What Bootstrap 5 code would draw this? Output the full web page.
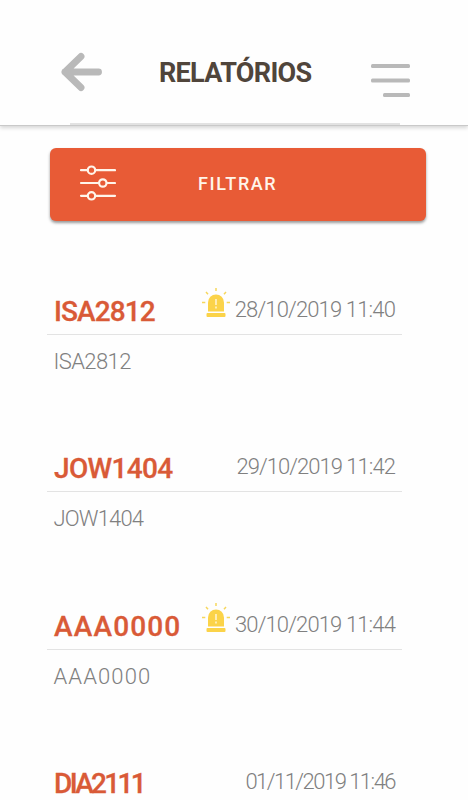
<!DOCTYPE html>
<html lang="pt-BR">
<head>
<meta charset="utf-8">
<meta name="viewport" content="width=device-width, initial-scale=1">
<title>Relatórios</title>
<link href="https://cdn.jsdelivr.net/npm/bootstrap@5.3.0/dist/css/bootstrap.min.css" rel="stylesheet">
<style>
body{background:#fefefe;font-family:Roboto,"Liberation Sans",sans-serif;height:800px}
.topbar{height:126px;padding:0 58px 0 61px;background:#fefefe;border-bottom:1px solid #c9c9c9;box-shadow:0 2px 4px rgba(0,0,0,.16)}
.topbar .tab-edge{height:2px;margin:0 10px 0 9px;background:#e2e2e2}
.page-title{font-size:27px;line-height:32px;font-weight:700;color:#50453b;letter-spacing:-.68px;margin:9px 0 0 57px}
.filter-btn{height:73px;width:376px;margin:22px 0 0 50px;border-radius:6px;background:#e85b36;color:#fff5ea;box-shadow:0 2px 3px rgba(0,0,0,.4);font-size:18px;font-weight:500;letter-spacing:1.6px;padding:0 0 2px 29px;border:0}
.filter-btn:hover{background:#e85b36;color:#fff5ea}
.filter-btn svg{margin-bottom:2px}
.filter-btn span{margin-left:82px}
.reports{height:515px;margin:64px 66px 0 47px}
.report{height:157.4px}
.report:last-child{height:50px}
.report-head{height:50px;border-bottom:1.5px solid #e3e3e3;padding:0 7px 0 7px}
.report:last-child .report-head{border-bottom:0}
.plate{font-size:28px;line-height:32px;font-weight:500;color:#d95a37;-webkit-text-stroke:.3px #d95a37;margin-top:11px;letter-spacing:var(--plate-track)}
.stamp{font-size:22px;line-height:26px;font-weight:300;color:#808080;margin-top:12px;letter-spacing:var(--stamp-track)}
.plate-sub{font-size:22px;line-height:26px;font-weight:300;color:#808080;padding-left:6.500px;margin-top:14px;letter-spacing:var(--sub-track)}
.siren{margin:3px 4px 0 auto}
.track-a{--plate-track:-.9px;--sub-track:-.6px;--stamp-track:-.85px}
.track-b{--plate-track:-.65px;--sub-track:-.85px;--stamp-track:-.96px}
.track-c{--plate-track:1.15px;--sub-track:1.1px;--stamp-track:-.87px}
.track-d{--plate-track:-2.65px;--stamp-track:-1.52px}
</style>
<script src="https://cdn.jsdelivr.net/npm/bootstrap@5.3.0/dist/js/bootstrap.bundle.min.js"></script>
</head>
<body class="overflow-hidden">
<svg class="d-none" xmlns="http://www.w3.org/2000/svg">
<symbol id="siren" viewBox="0 0 30 31">
<path d="M7 23.500V14.500a8 8 0 0 1 16 0v9z" fill="#fbd349"/>
<rect x="5.500" y="25" width="19" height="4" rx="1" fill="#fbd349"/>
<path d="M15 0v3M5 4l2 2.200M25 4l-2 2.200M1 14.500h3.300M25.700 14.500H29" stroke="#f6d75c" stroke-width="1.500"/>
<path d="M15 11v6M15 18.500v2" stroke="#fff3cf" stroke-width="1.600"/>
</symbol>
</svg>
<header class="topbar d-flex flex-column justify-content-between">
<div class="d-flex align-items-start pt-5">
<svg class="mt-1" width="41" height="40" viewBox="0 0 41 40"><path d="M20 4.500 4 20 20 35.500M4 20H37.500" fill="none" stroke="#b9b9b9" stroke-width="6.900" stroke-linecap="round" stroke-linejoin="round"/></svg>
<h1 class="page-title">RELATÓRIOS</h1>
<svg class="ms-auto mt-3" width="39" height="33" viewBox="0 0 39 33" fill="#b9b9b9"><rect width="39" height="4" rx="1.500"/><rect y="14.500" width="39" height="4" rx="1.500"/><rect x="12" y="29" width="27" height="4" rx="1.500"/></svg>
</div>
<div class="tab-edge"></div>
</header>
<main>
<button class="btn filter-btn d-flex align-items-center" type="button">
<svg width="37" height="36" viewBox="0 0 37 36" fill="#e85b36" stroke="#fff5ea" stroke-width="2.200" stroke-linecap="round"><path d="M2 5.200h34M2 18h34M2 30.800h34"/><circle cx="12.500" cy="5.200" r="3.700"/><circle cx="23.800" cy="18" r="3.700"/><circle cx="12.500" cy="30.800" r="3.700"/></svg>
<span>FILTRAR</span>
</button>
<div class="reports overflow-hidden">
<article class="report track-a">
<div class="report-head d-flex align-items-start"><span class="plate">ISA2812</span><svg class="siren" width="30" height="31"><use href="#siren"/></svg><time class="stamp">28/10/2019 11:40</time></div>
<div class="plate-sub">ISA2812</div>
</article>
<article class="report track-b">
<div class="report-head d-flex align-items-start"><span class="plate">JOW1404</span><time class="stamp ms-auto">29/10/2019 11:42</time></div>
<div class="plate-sub">JOW1404</div>
</article>
<article class="report track-c">
<div class="report-head d-flex align-items-start"><span class="plate">AAA0000</span><svg class="siren" width="30" height="31"><use href="#siren"/></svg><time class="stamp">30/10/2019 11:44</time></div>
<div class="plate-sub">AAA0000</div>
</article>
<article class="report track-d">
<div class="report-head d-flex align-items-start"><span class="plate">DIA2111</span><time class="stamp ms-auto">01/11/2019 11:46</time></div>
</article>
</div>
</main>
</body>
</html>
